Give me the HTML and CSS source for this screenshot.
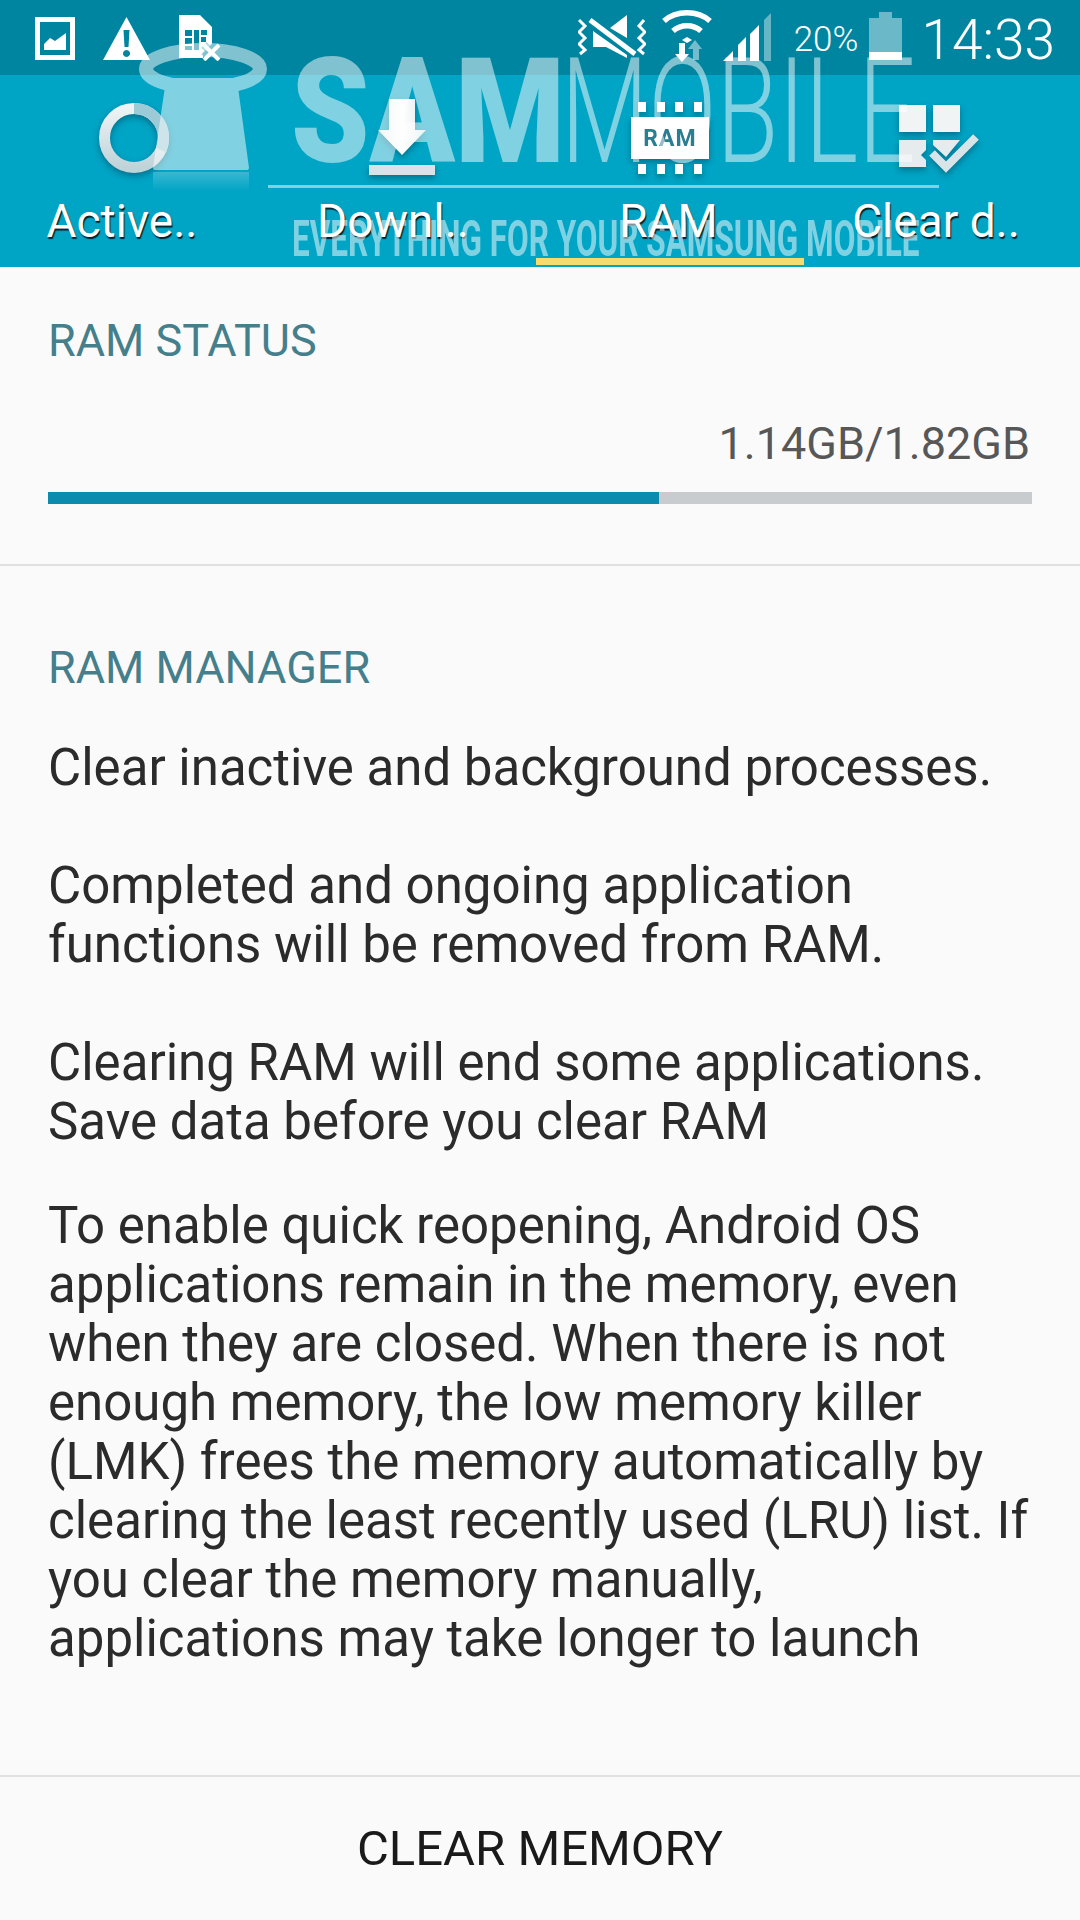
FILE: index.html
```html
<!DOCTYPE html>
<html lang="en">
<head>
<meta charset="utf-8">
<title>RAM</title>
<link rel="stylesheet" href="styles.css">
</head>
<body>
<div class="screen">
  <header class="top">
    <div class="status">
      <div class="status-left">
        <svg class="i-pic" viewBox="0 0 40 43"><path fill="#fff" fill-rule="evenodd" d="M0 0h40v43H0zM5 5v33h30V5z"/><path fill="#fff" d="M9 33v-6l6-6 5 3 11-8v17z"/></svg>
        <svg class="i-warn" viewBox="0 0 47 43"><path fill="#fff" fill-rule="evenodd" d="M23.500 0 47 43H0zM20.500 13l1 17h4l1-17zM23.500 33a3.500 3.500 0 1 0 .01 0z"/></svg>
        <svg class="i-sim" viewBox="0 0 42 46"><path fill="#fff" d="M0 0h21l12 12v17L24 38v5H0z"/><path fill="#0085a1" d="M6 15h7v6H6zM6 23h7v6H6zM6 31h7v4H6zM15 15h5v20h-5zM22 15h6v5h-6zM22 22h5v5h-5z"/><path stroke="#0085a1" stroke-width="8" d="m25 30 12 12M37 30 25 42" opacity=".6"/><path stroke="#fff" stroke-width="4" d="m25 30 15 15M40 30 25 45"/></svg>
      </div>
      <div class="status-right">
        <svg class="i-mute" viewBox="0 0 68 46"><g fill="none" stroke="#fff" stroke-width="3"><path d="m1 6 6 6-6 6 6 6-6 6 6 6-5 4"/><path d="m66 6-5 6 6 6-6 6 6 6-6 6 5 4"/></g><path fill="#fff" d="M15 17l34 24v3L28 33H15zM32 14 49 1v23z"/><path stroke="#fff" stroke-width="5" d="m12 6 45 34"/></svg>
        <svg class="i-wifi" viewBox="0 0 50 54"><g fill="none" stroke="#fff" stroke-width="5.500"><path d="M2 12C14 1 36 1 48 12"/><path d="M11 22c8-7 20-7 28 0"/></g><path fill="#fff" d="M20 31l5-3 5 3-5 3z"/><path fill="#fff" d="M17 34h6v11h4l-7 8-7-8h4z"/><path fill="#fff" fill-opacity=".45" d="M31 51V40h-5l7-9 7 9h-3v11z"/></svg>
        <svg class="i-signal" viewBox="0 0 48 48"><path fill="#fff" d="M0 48l10-10v10zM15 32l8-8v24h-8zM27 21l9-9v36h-9z"/><path fill="#fff" fill-opacity=".4" d="M41 7l7-7v48h-7z"/></svg>
        <span class="batt-text">20%</span>
        <svg class="i-batt" viewBox="0 0 33 48"><path fill="#fff" fill-opacity=".42" d="M10 0h13v6h10v34H0V6h10z"/><path fill="#fff" d="M0 40h33v8H0z"/></svg>
        <span class="clock">14:33</span>
      </div>
    </div>
    <nav class="tabs">
      <div class="tab tab-a">
        <svg class="tab-icon i-ring" viewBox="0 0 70 70">
          <defs><linearGradient id="ringfill" x1="0" y1="0" x2="0" y2="1"><stop offset="0" stop-color="#eef3f5"/><stop offset="1" stop-color="#bfd3d9"/></linearGradient></defs>
          <circle cx="35" cy="35" r="29.500" fill="none" stroke="url(#ringfill)" stroke-width="11"/>
          <path d="M35 5.500A29.500 29.500 0 0 1 62 47" fill="none" stroke="#9ccad7" stroke-width="11"/>
        </svg>
        <span class="tab-label">Active..</span>
      </div>
      <div class="tab tab-b">
        <svg class="tab-icon i-down" viewBox="0 0 66 76">
          <defs><linearGradient id="downfill" x1="0" y1="0" x2="1" y2="0"><stop offset="0" stop-color="#e6edf0"/><stop offset=".5" stop-color="#fff"/><stop offset="1" stop-color="#dfe7ea"/></linearGradient></defs>
          <path fill="url(#downfill)" d="M20 0h26v31h11L33 56 9 31h11z"/><path fill="#d8e2e7" d="M0 66h66v10H0z"/>
        </svg>
        <span class="tab-label">Downl..</span>
      </div>
      <div class="tab tab-c">
        <div class="ram-icon">
          <div class="ram-teeth"><i></i><i></i><i></i><i></i></div>
          <div class="ram-chip">RAM</div>
          <div class="ram-teeth"><i></i><i></i><i></i><i></i></div>
        </div>
        <span class="tab-label">RAM</span>
        <i class="tab-line"></i>
      </div>
      <div class="tab tab-d">
        <svg class="tab-icon i-clear" viewBox="0 0 81 70"><path fill="#f1f4f5" d="M0 0h27v27H0zM34 0h27v27H34z"/><path fill="#e6ebed" d="M0 35h27v10l-5 5 5 5v7H0zM34 35h27L47 52 34 40z"/><path fill="none" stroke="#d9e4e8" stroke-width="8" d="m33 48 14 14 30-30"/></svg>
        <span class="tab-label">Clear d..</span>
      </div>
    </nav>
    <div class="mark" aria-hidden="true">
      <svg class="mark-bag" viewBox="0 0 128 150">
        <defs><linearGradient id="bagfade" x1="0" y1="0" x2="0" y2="1"><stop offset="0" stop-color="#fff" stop-opacity=".45"/><stop offset="1" stop-color="#fff" stop-opacity="0"/></linearGradient></defs>
        <ellipse cx="64" cy="26" rx="57" ry="19" fill="none" stroke="#fff" stroke-width="14"/>
        <path fill="#fff" stroke="#fff" stroke-width="4" stroke-linejoin="round" d="M29 37h67l12 88H16z"/>
        <path fill="url(#bagfade)" d="M14 129h96v19H14z"/>
      </svg>
      <span class="mark-sam">SAM</span>
      <span class="mark-mobile">MOBILE</span>
      <i class="mark-rule"></i>
      <span class="mark-tag">EVERYTHING FOR YOUR SAMSUNG MOBILE</span>
    </div>
  </header>
  <main class="body">
    <section class="ram-status">
      <h2 class="heading">RAM STATUS</h2>
      <div class="usage">1.14GB/1.82GB</div>
      <div class="bar"><div class="bar-fill"></div></div>
    </section>
    <section class="ram-manager">
      <h2 class="heading">RAM MANAGER</h2>
      <p class="copy">Clear inactive and background processes.</p>
      <p class="copy gap-l">Completed and ongoing application<br>functions will be removed from RAM.</p>
      <p class="copy gap-l">Clearing RAM will end some applications.<br>Save data before you clear RAM</p>
      <p class="copy gap-m">To enable quick reopening, Android OS<br>applications remain in the memory, even<br>when they are closed. When there is not<br>enough memory, the low memory killer<br>(LMK) frees the memory automatically by<br>clearing the least recently used (LRU) list. If<br>you clear the memory manually,<br>applications may take longer to launch</p>
    </section>
    <footer class="action">CLEAR MEMORY</footer>
  </main>
</div>
</body>
</html>
```
FILE: styles.css
```css
* { box-sizing: border-box; }
html, body { margin: 0; padding: 0; }
body { width: 1080px; height: 1920px; overflow: hidden; background: #fafafa; font-family: Roboto, "Noto Sans", sans-serif; }
.screen { width: 1080px; height: 1920px; display: flex; flex-direction: column; }

.top { position: relative; height: 267px; background: #00a4c5; flex: none; overflow: hidden; }
.status { height: 75px; background: #0085a1; display: flex; justify-content: space-between; padding: 0 25px 0 35px; }
.status-left { display: flex; align-items: flex-start; padding-top: 15px; }
.status-left svg { display: block; }
.i-pic { width: 40px; height: 43px; margin-top: 2px; }
.i-warn { width: 47px; height: 43px; margin: 2px 0 0 28px; }
.i-sim { width: 42px; height: 46px; margin-left: 29px; }
.status-right { display: flex; align-items: flex-start; color: #fff; }
.status-right svg { display: block; }
.i-mute { width: 68px; height: 46px; margin-top: 14px; }
.i-wifi { width: 50px; height: 54px; margin: 9px 0 0 16px; }
.i-signal { width: 48px; height: 48px; margin: 13px 0 0 11px; }
.batt-text { font-size: 35px; font-weight: 300; line-height: 40px; margin: 20px 0 0 23px; }
.i-batt { width: 33px; height: 48px; margin: 12px 0 0 11px; }
.clock { font-size: 55px; font-weight: 300; line-height: 60px; margin: 10px 0 0 19px; }

.tabs { height: 192px; display: grid; grid-template-columns: 268px 268px 268px 268px; }
.tab { position: relative; display: flex; flex-direction: column; align-items: center; padding-top: 24px; }
.tab-icon { display: block; filter: drop-shadow(0 3px 3px rgba(0, 50, 70, .45)); }
.tab-label { position: absolute; top: 116px; left: 0; right: 0; text-align: center; color: #fff; font-size: 46px; font-weight: 400; line-height: 60px; white-space: nowrap; text-shadow: 1px 2px 1px #00222c; }
.tab-a .tab-label { right: 24px; }
.tab-b .tab-label { right: 18px; }
.tab-c .tab-label { right: 3px; }
.tab-d .tab-label { right: 4px; }
.i-ring { width: 70px; height: 70px; margin-top: 4px; }
.i-down { width: 66px; height: 76px; }
.i-clear { width: 81px; height: 70px; margin: 6px 0 0 3px; }
.ram-icon { display: flex; flex-direction: column; align-items: center; gap: 5px; margin-top: 3px; filter: drop-shadow(0 3px 3px rgba(0, 50, 70, .45)); }
.ram-teeth { width: 64px; display: flex; justify-content: space-between; }
.ram-teeth i { width: 8px; height: 10px; background: #fff; }
.ram-chip { width: 78px; height: 42px; background: #fff; color: #2b7d91; font-size: 23px; font-weight: 700; line-height: 44px; text-align: center; letter-spacing: 1px; }
.tab-line { position: absolute; left: 0; right: 0; top: 183px; height: 7px; background: #f4dd6e; }

.mark { position: absolute; inset: 0; pointer-events: none; color: #fff; opacity: .5; }
.mark-bag { position: absolute; left: 139px; top: 43px; width: 128px; height: 150px; }
.mark-sam, .mark-mobile, .mark-tag { position: absolute; white-space: nowrap; transform-origin: left top; }
.mark-sam { left: 291px; top: 40px; font-size: 146px; line-height: 146px; font-weight: 900; transform: scaleX(.86); }
.mark-mobile { left: 561px; top: 40px; font-size: 146px; line-height: 146px; font-weight: 300; transform: scaleX(.69); }
.mark-rule { position: absolute; left: 268px; top: 185px; width: 671px; height: 3px; background: #fff; }
.mark-tag { left: 292px; top: 214px; font-size: 50px; line-height: 50px; font-weight: 700; transform: scaleX(.63); }

.body { flex: 1; display: flex; flex-direction: column; }
.heading { margin: 0; font-size: 45px; font-weight: 400; line-height: 60px; color: #457f8c; }
.ram-status { padding: 44px 48px 60px; border-bottom: 2px solid #e1e1e1; }
.usage { margin-top: 43px; padding-right: 2px; text-align: right; font-size: 45px; line-height: 60px; color: #575757; }
.bar { margin-top: 18px; height: 12px; background: #c9cccf; }
.bar-fill { width: 611px; height: 12px; background: #0b8cae; }
.ram-manager { padding: 72px 0 0 48px; }
.copy { margin: 0; font-size: 51px; line-height: 59px; color: #2b2b2b; white-space: nowrap; }
.heading + .copy { margin-top: 40px; }
.gap-l { margin-top: 59px; }
.gap-m { margin-top: 45px; }
.action { margin-top: auto; height: 145px; border-top: 2px solid #e1e1e1; display: flex; align-items: center; justify-content: center; font-size: 49px; color: #1a1a1a; }
```
